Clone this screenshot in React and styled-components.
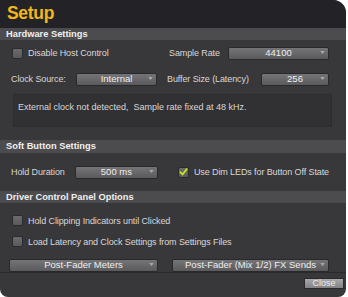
import styled, { createGlobalStyle } from "styled-components";

const GlobalStyle = createGlobalStyle`
  html, body {
    margin: 0;
    padding: 0;
    background: #ffffff;
  }
  body {
    font-family: "Liberation Sans", Arial, sans-serif;
  }
`;

export default function App() {
    return (
        <>
            <GlobalStyle />
            <Window>
                <TitleBar>
                    <Title>Setup</Title>
                </TitleBar>

                <SectionHeader>Hardware Settings</SectionHeader>
                <Section $pad="0 17px 13px 11px">
                    <Row $h={26}>
                        <CheckLabel>
                            <Box />
                            <Label>Disable Host Control</Label>
                        </CheckLabel>
                        <Spacer />
                        <Label $w={59}>Sample Rate</Label>
                        <Dropdown value="44100" $w={101} />
                    </Row>
                    <Row $h={26}>
                        <Label $w={65}>Clock Source:</Label>
                        <Dropdown value="Internal" $w={81} />
                        <Spacer />
                        <Label $w={94}>Buffer Size (Latency)</Label>
                        <Dropdown value="256" $w={68} />
                    </Row>
                    <InfoBox>External clock not detected,&nbsp; Sample rate fixed at 48 kHz.</InfoBox>
                </Section>

                <SectionHeader $h={13}>Soft Button Settings</SectionHeader>
                <Section $pad="12px 17px 12px 11px">
                    <Row $h={14}>
                        <Label $w={64}>Hold Duration</Label>
                        <Dropdown value="500 ms" $w={83} />
                        <Gap $w={19} />
                        <CheckLabel>
                            <Box $checked>
                                <Tick />
                            </Box>
                            <Label>Use Dim LEDs for Button Off State</Label>
                        </CheckLabel>
                    </Row>
                </Section>

                <SectionHeader>Driver Control Panel Options</SectionHeader>
                <Section $pad="12px 17px 0 11px">
                    <Row $h={21} $top>
                        <CheckLabel>
                            <Box />
                            <Label>Hold Clipping Indicators until Clicked</Label>
                        </CheckLabel>
                    </Row>
                    <Row $h={21} $top>
                        <CheckLabel>
                            <Box />
                            <Label>Load Latency and Clock Settings from Settings Files</Label>
                        </CheckLabel>
                    </Row>
                </Section>
                <Section $pad="1px 17px 0 9px">
                    <Row $h={14}>
                        <Dropdown value="Post-Fader Meters" $w={149} />
                        <Spacer />
                        <Dropdown value="Post-Fader (Mix 1/2) FX Sends" $w={157} />
                    </Row>
                </Section>

                <Footer>
                    <CloseButton>Close</CloseButton>
                </Footer>
            </Window>
        </>
    );
}

function Dropdown({ value, $w }) {
    return (
        <Select $w={$w}>
            <SelectText>{value}</SelectText>
            <Arrow viewBox="0 0 6 4">
                <path d="M0 0 L6 0 L3 4 Z" fill="#a9a8ab" />
            </Arrow>
        </Select>
    );
}

function Tick() {
    return (
        <svg width="10" height="10" viewBox="0 0 10 10">
            <path d="M1.5 5.2 L4 7.8 L8.6 1.8" fill="none" stroke="#c4ea12" strokeWidth="1.9" strokeLinecap="round" strokeLinejoin="round" />
        </svg>
    );
}

const Window = styled.div`
    width: 346px;
    height: 297px;
    background: #38373a;
    border-radius: 0 13px 8px 8px;
    overflow: hidden;
    display: flex;
    flex-direction: column;
    color: #dcdcdc;
`;

const TitleBar = styled.div`
    height: 28px;
    background: #232226;
    display: flex;
    align-items: center;
    padding-left: 7px;
    flex-shrink: 0;
`;

const Title = styled.div`
    font-family: "Liberation Sans", Arial, sans-serif;
    font-weight: bold;
    font-size: 17.5px;
    letter-spacing: -0.3px;
    color: #f3b61c;
    margin-top: -2px;
`;

const SectionHeader = styled.div`
    height: ${(p) => p.$h || 12}px;
    line-height: ${(p) => p.$h || 12}px;
    background: #4c4b4e;
    padding-left: 6px;
    font-size: 9.3px;
    font-weight: bold;
    color: #f0f0f0;
    flex-shrink: 0;
`;

const Section = styled.div`
    padding: ${(p) => p.$pad};
    display: flex;
    flex-direction: column;
`;

const Row = styled.div`
    height: ${(p) => p.$h}px;
    display: flex;
    align-items: ${(p) => (p.$top ? "flex-start" : "center")};
    flex-shrink: 0;
`;

const Spacer = styled.div`
    flex: 1;
`;

const Gap = styled.div`
    width: ${(p) => p.$w}px;
    flex-shrink: 0;
`;

const Label = styled.span`
    font-size: 9px;
    letter-spacing: -0.1px;
    color: #d8d8d8;
    white-space: nowrap;
    ${(p) => (p.$w ? `width: ${p.$w}px;` : "")}
`;

const CheckLabel = styled.div`
    display: flex;
    align-items: center;
    gap: 5px;
    padding-left: 1px;
`;

const Box = styled.div`
    width: 9px;
    height: 9px;
    border-radius: 2px;
    border: 1px solid #2b2a2d;
    background: linear-gradient(#6b6a6d, #5a595c);
    display: flex;
    align-items: center;
    justify-content: center;
    flex-shrink: 0;
`;

const Select = styled.div`
    width: ${(p) => p.$w}px;
    height: 13px;
    box-sizing: border-box;
    border: 1px solid #29282b;
    border-radius: 2px;
    background: linear-gradient(#757477, #5a595c);
    position: relative;
    display: flex;
    align-items: center;
    justify-content: center;
    flex-shrink: 0;
`;

const SelectText = styled.span`
    font-size: 9.5px;
    color: #eeeeee;
    white-space: nowrap;
    margin-top: -1px;
`;

const Arrow = styled.svg`
    position: absolute;
    right: 3px;
    top: 3px;
    width: 5px;
    height: 3px;
`;

const InfoBox = styled.div`
    margin-top: 2px;
    margin-left: 2px;
    height: 33px;
    box-sizing: border-box;
    border: 1px solid #2c2b2e;
    background: #313033;
    padding: 7px 0 0 4px;
    font-size: 9px;
    color: #d8d8d8;
    width: 319px;
`;

const Footer = styled.div`
    margin-top: auto;
    height: 21px;
    border-top: 1px solid #2a292c;
    display: flex;
    justify-content: flex-end;
    align-items: flex-start;
    padding: 5px 2px 0 0;
    flex-shrink: 0;
`;

const CloseButton = styled.div`
    width: 40px;
    height: 11px;
    box-sizing: border-box;
    border: 1px solid #2a292c;
    background: linear-gradient(#a9a8ab, #828184);
    font-size: 9px;
    line-height: 9px;
    color: #ececec;
    text-align: center;
`;
